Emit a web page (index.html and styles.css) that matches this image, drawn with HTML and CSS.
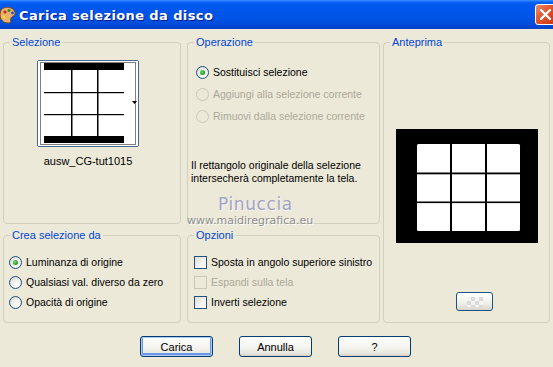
FILE: index.html
```html
<!DOCTYPE html>
<html lang="it">
<head>
<meta charset="utf-8">
<title>Carica selezione da disco</title>
<link rel="stylesheet" href="styles.css">
</head>
<body>
<div class="window">
  <div class="titlebar">
    <svg class="app-icon" width="16" height="18" viewBox="0 0 16 18">
      <path d="M2 3 C6 0 13 1 15 6 C16 10 12 10 11 12 C10 15 12 17 8 17 C3 17 0 13 0 9 C0 6 1 4 2 3 Z" fill="#e9b26a" stroke="#7a4a20" stroke-width="1"/>
      <circle cx="5" cy="6" r="1.6" fill="#d62020"/>
      <circle cx="9" cy="4.5" r="1.5" fill="#2a8f2a"/>
      <circle cx="12.5" cy="7" r="1.4" fill="#2050d0"/>
      <circle cx="4" cy="11" r="1.5" fill="#f0e020"/>
    </svg>
    <span class="title">Carica selezione da disco</span>
    <div class="close">
      <svg width="13" height="13" viewBox="0 0 13 13"><path d="M2 2 L11 11 M11 2 L2 11" stroke="#fff" stroke-width="2.4" stroke-linecap="round"/></svg>
    </div>
  </div>

  <div class="client">
    <div class="groups">
      <fieldset class="grp g-sel">
        <legend>Selezione</legend>
        <div class="sel-wrap">
          <div class="thumb">
            <svg width="100" height="85" viewBox="0 0 100 85">
              <rect x="0" y="0" width="100" height="85" fill="#fff"/>
              <rect x="2.5" y="1.5" width="95" height="82" fill="none" stroke="#000" stroke-width="1" stroke-dasharray="1 1"/>
              <rect x="6" y="2" width="80" height="7" fill="#000"/>
              <rect x="6" y="75" width="80" height="7" fill="#000"/>
              <rect x="33" y="9" width="1.5" height="66" fill="#000"/>
              <rect x="59" y="9" width="1.5" height="66" fill="#000"/>
              <rect x="6" y="31" width="80" height="1.2" fill="#000"/>
              <rect x="6" y="53" width="80" height="1.2" fill="#000"/>
              <path d="M94 40 L99 40 L96.5 43 Z" fill="#000"/>
            </svg>
          </div>
          <div class="fname">ausw_CG-tut1015</div>
        </div>
      </fieldset>

      <fieldset class="grp g-op">
        <legend>Operazione</legend>
        <div class="inner op-inner">
          <div class="row"><span class="radio checked"></span><span>Sostituisci selezione</span></div>
          <div class="row disabled"><span class="radio"></span><span>Aggiungi alla selezione corrente</span></div>
          <div class="row disabled"><span class="radio"></span><span>Rimuovi dalla selezione corrente</span></div>
          <p class="desc">Il rettangolo originale della selezione<br>intersecherà completamente la tela.</p>
        </div>
      </fieldset>

      <fieldset class="grp g-prev">
        <legend>Anteprima</legend>
        <div class="prev-inner">
          <div class="preview">
            <svg width="142" height="114" viewBox="0 0 142 114">
              <rect x="0" y="0" width="142" height="114" fill="#000"/>
              <rect x="21" y="15" width="103" height="87" rx="1.5" fill="#fff"/>
              <rect x="54" y="15" width="2" height="87" fill="#000"/>
              <rect x="89" y="15" width="2" height="87" fill="#000"/>
              <rect x="21" y="43.5" width="103" height="1.8" fill="#000"/>
              <rect x="21" y="72.5" width="103" height="1.6" fill="#000"/>
            </svg>
          </div>
          <div class="mini"><span class="checker"></span></div>
        </div>
      </fieldset>

      <fieldset class="grp g-crea">
        <legend>Crea selezione da</legend>
        <div class="inner crea-inner">
          <div class="row"><span class="radio checked"></span><span>Luminanza di origine</span></div>
          <div class="row"><span class="radio"></span><span>Qualsiasi val. diverso da zero</span></div>
          <div class="row"><span class="radio"></span><span>Opacità di origine</span></div>
        </div>
      </fieldset>

      <fieldset class="grp g-opz">
        <legend>Opzioni</legend>
        <div class="inner opz-inner">
          <div class="row"><span class="check"></span><span>Sposta in angolo superiore sinistro</span></div>
          <div class="row disabled"><span class="check"></span><span>Espandi sulla tela</span></div>
          <div class="row"><span class="check"></span><span>Inverti selezione</span></div>
        </div>
      </fieldset>
    </div>

    <div class="buttons">
      <div class="btn default">Carica</div>
      <div class="btn">Annulla</div>
      <div class="btn">?</div>
    </div>

    <div class="watermark">
      <div class="wm-name">Pinuccia</div>
      <div class="wm-url">www.maidiregrafica.eu</div>
    </div>
  </div>
</div>
</body>
</html>
```
FILE: styles.css
```css
* { box-sizing: border-box; }
html, body { margin: 0; padding: 0; }
body {
  width: 553px;
  height: 367px;
  overflow: hidden;
  background: #ECE9D8;
  font-family: "Liberation Sans", Arial, sans-serif;
  font-size: 10.5px;
  color: #000;
}
.window { width: 553px; height: 367px; position: relative; }

.titlebar {
  height: 29px;
  display: flex;
  align-items: center;
  overflow: hidden;
  background: linear-gradient(to bottom, #3D95FF 0, #0A63F5 2px, #0058EE 5px, #0054E6 18px, #004BDA 24px, #0040C8 29px);
}
.app-icon { margin-left: 0; margin-right: 3px; margin-top: 1px; flex: none; }
.title {
  color: #fff;
  font-family: "DejaVu Sans", sans-serif;
  font-weight: bold;
  font-size: 13px;
  letter-spacing: 0.4px;
  text-shadow: 1px 1px 0 #0A1A8A;
  flex: 1;
  margin-top: 1px;
}
.close {
  width: 21px;
  height: 21px;
  margin-right: -3px;
  border: 1px solid #fff;
  border-radius: 3px;
  background: linear-gradient(135deg, #F08C6A 0, #E2522C 45%, #C73A14 100%);
  display: flex;
  align-items: center;
  justify-content: center;
  flex: none;
}

.client { padding: 7px 4px 0 3px; }
.groups {
  display: grid;
  grid-template-columns: 184px 196px 167px;
  grid-template-rows: 188px 94px;
  row-gap: 5px;
  grid-template-areas:
    "sel op prev"
    "crea opz prev";
}
.grp {
  margin: 0;
  padding: 0;
  min-width: 0;
  border: 1px solid #D0D0BF;
  border-radius: 4px;
}
.grp legend {
  color: #0046D5;
  font-size: 11px;
  line-height: 13px;
  padding: 0 2px;
  margin-left: 6px;
}
.g-sel { grid-area: sel; width: 178px; }
.g-op { grid-area: op; width: 193px; }
.g-prev { grid-area: prev; width: 167px; }
.g-crea { grid-area: crea; width: 178px; }
.g-opz { grid-area: opz; width: 193px; }

.sel-wrap {
  width: 102px;
  margin: 11px 0 0 33px;
  display: flex;
  flex-direction: column;
  align-items: center;
}
.thumb {
  width: 102px;
  height: 87px;
  border: 1px solid #4A6A90;
  border-radius: 2px;
  background: #fff;
}
.thumb svg { display: block; }
.fname {
  margin-top: 8px;
  font-size: 11px;
  line-height: 13px;
  white-space: nowrap;
}

.inner { display: flex; flex-direction: column; }
.row {
  display: flex;
  align-items: center;
  gap: 4px;
  white-space: nowrap;
}
.row.disabled { color: #ACA899; }
.op-inner { padding: 12px 0 0 8px; }
.op-inner .row { height: 22px; }
.crea-inner { padding: 10px 0 0 5px; }
.crea-inner .row { height: 20px; }
.opz-inner { padding: 10px 0 0 6px; }
.opz-inner .row { height: 20px; }

.radio {
  width: 13px;
  height: 13px;
  border-radius: 50%;
  border: 1px solid #1C5180;
  background: radial-gradient(circle at 70% 70%, #FFFFFF 0, #F2F2EE 40%, #D6D5CC 100%);
  flex: none;
  display: flex;
  align-items: center;
  justify-content: center;
}
.radio.checked::after {
  content: "";
  width: 5px;
  height: 5px;
  border-radius: 50%;
  background: radial-gradient(circle at 40% 40%, #7BE07B 0, #21A121 60%, #167A16 100%);
}
.row.disabled .radio {
  border-color: #CAC8BB;
  background: #ECE9D8;
}
.check {
  width: 13px;
  height: 13px;
  border: 1px solid #1C5180;
  background: linear-gradient(135deg, #DCDCD7 0, #F4F4F0 60%, #FFFFFF 100%);
  flex: none;
}
.row.disabled .check {
  border-color: #CAC8BB;
  background: #ECE9D8;
}
.desc {
  margin: 32px 0 0 -5px;
  line-height: 13px;
}

.prev-inner {
  display: flex;
  flex-direction: column;
  padding-left: 12px;
}
.preview { margin-top: 80px; width: 142px; height: 114px; }
.preview svg { display: block; }
.mini {
  margin: 49px 0 0 60px;
  width: 37px;
  height: 19px;
  border: 1px solid #1C5180;
  border-radius: 3px;
  background: linear-gradient(to bottom, #FFFFFF 0, #F0F0EA 60%, #D8D6CC 100%);
  display: flex;
  align-items: center;
  justify-content: center;
}
.checker {
  width: 16px;
  height: 10px;
  background:
    conic-gradient(#D8D8D8 25%, #F4F4F4 0 50%, #D8D8D8 0 75%, #F4F4F4 0) 0 0 / 8px 8px;
  opacity: 0.9;
}

.buttons {
  display: flex;
  justify-content: center;
  gap: 26px;
  margin-top: 13px;
  padding-right: 1px;
}
.btn {
  width: 73px;
  height: 21px;
  border: 1px solid #003C74;
  border-radius: 3px;
  background: linear-gradient(to bottom, #FFFFFF 0, #F5F4EF 50%, #E9E8E0 85%, #D6D0C5 100%);
  display: flex;
  align-items: center;
  justify-content: center;
  font-size: 11px;
}
.btn.default {
  box-shadow: inset 0 0 0 1px #ADCBF7, inset 0 -1px 0 2px #6C97E8;
}

.watermark {
  position: absolute;
  left: 187px;
  top: 194px;
  pointer-events: none;
}
.wm-name {
  margin-left: 31px;
  font-family: "DejaVu Sans", sans-serif;
  font-size: 17px;
  letter-spacing: 0.6px;
  line-height: 20px;
  color: #A4A4C4;
  text-shadow: 1px 1px 0 #F4F4F8;
}
.wm-url {
  margin-top: 1px;
  font-family: "DejaVu Sans", sans-serif;
  font-size: 11px;
  line-height: 12px;
  color: #8E8E8E;
  text-shadow: 1px 1px 0 #FFFFFF;
}
```
